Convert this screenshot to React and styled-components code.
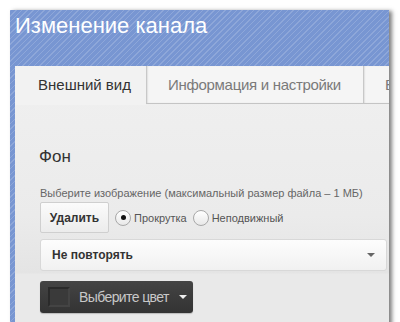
import React from "react";
import styled, { createGlobalStyle } from "styled-components";

const Global = createGlobalStyle`
  html, body { margin: 0; padding: 0; background: #fff; }
  body { font-family: "Liberation Sans", Arial, sans-serif; }
  * { box-sizing: border-box; }
`;

const Page = styled.div`
  padding: 10px 0 0 10px;
  height: 322px;
  overflow: hidden;
`;

const Panel = styled.div`
  width: 379px;
  height: 330px;
  background-color: #7896d2;
  background-image: repeating-linear-gradient(
    135deg,
    rgba(255, 255, 255, 0.16) 0px,
    rgba(255, 255, 255, 0.16) 1px,
    transparent 1px,
    transparent 4px
  );
  box-shadow: 3px 1px 4px rgba(0, 0, 0, 0.5);
  display: flex;
  flex-direction: column;
`;

const Title = styled.h1`
  margin: 3px 0 0 5px;
  font-size: 22px;
  line-height: 26px;
  font-weight: normal;
  color: #fff;
`;

const Card = styled.div`
  margin: 27px 0 0 5px;
  width: 374px;
  flex: 1;
  background: linear-gradient(#f0f0f0 0px, #ebebeb 150px, #e4e4e4 207px, #e9e9e9 208px);
  display: flex;
  flex-direction: column;
  overflow: hidden;
`;

const Tabs = styled.div`
  display: flex;
  height: 39px;
  width: 100%;
  white-space: nowrap;
  overflow: hidden;
`;

const Tab = styled.div`
  flex: ${(p) => (p.$grow ? "1 1 0" : "0 0 auto")};
  min-width: 0;
  width: ${(p) => (p.$w ? `${p.$w}px` : "auto")};
  padding-left: ${(p) => p.$pad}px;
  font-size: 15px;
  letter-spacing: ${(p) => (p.$active ? "0" : "-0.3px")};
  line-height: 38px;
  color: ${(p) => (p.$active ? "#333" : "#7a7a7a")};
  background: ${(p) => (p.$active ? "#f2f2f2" : "#f5f5f5")};
  height: ${(p) => (p.$active ? "39px" : "38px")};
  border-bottom: ${(p) => (p.$active ? "none" : "1px solid #c4c4c4")};
  box-shadow: ${(p) => (p.$active ? "none" : "inset 2px 0 2px -1px rgba(0,0,0,0.25)")};
  overflow: hidden;
`;

const Body = styled.div`
  padding: 42px 0 0 25px;
  display: flex;
  flex-direction: column;
  flex: 1;
`;

const Heading = styled.h2`
  margin: 0 0 0 -1px;
  font-size: 17px;
  line-height: 20px;
  font-weight: normal;
  color: #333;
`;

const Hint = styled.p`
  margin: 20px 0 0;
  font-size: 11px;
  line-height: 13px;
  color: #666;
`;

const Row = styled.div`
  display: flex;
  align-items: center;
  margin-top: 2px;
  height: 31px;
`;

const Button = styled.button`
  height: 31px;
  width: 69px;
  padding: 0;
  font-family: inherit;
  font-size: 12px;
  font-weight: bold;
  color: #333;
  background: linear-gradient(#fbfbfb, #ececec);
  border: 1px solid #cfcfcf;
  border-radius: 2px;
`;

const RadioLabel = styled.label`
  display: flex;
  align-items: center;
  margin-left: ${(p) => p.$ml}px;
  font-size: 11px;
  color: #555;
`;

const Radio = styled.span`
  width: 16px;
  height: 16px;
  border-radius: 50%;
  border: 1px solid #a8a8a8;
  background: linear-gradient(#fff, #e8e8e8);
  display: flex;
  align-items: center;
  justify-content: center;
  margin-right: 3px;
  &::after {
    content: "";
    width: 5px;
    height: 5px;
    border-radius: 50%;
    background: ${(p) => (p.$checked ? "#111" : "transparent")};
  }
`;

const Select = styled.div`
  margin-top: 6px;
  width: 347px;
  height: 32px;
  border: 1px solid #d8d8d8;
  border-radius: 3px;
  background: linear-gradient(#fdfdfd, #f1f1f1);
  display: flex;
  align-items: center;
  justify-content: space-between;
  padding: 0 11px 0 11px;
  font-size: 12px;
  font-weight: bold;
  color: #333;
`;

const Caret = styled.span`
  flex: none;
  width: 0;
  height: 0;
  border-left: ${(p) => p.$s}px solid transparent;
  border-right: ${(p) => p.$s}px solid transparent;
  border-top: ${(p) => p.$s}px solid ${(p) => p.$c};
`;

const ColorButton = styled.div`
  margin-top: 10px;
  width: 153px;
  height: 32px;
  border-radius: 3px;
  background: linear-gradient(#444, #333);
  display: flex;
  align-items: center;
  padding-left: 8px;
  white-space: nowrap;
  box-shadow: 0 1px 1px rgba(0, 0, 0, 0.2);
`;

const Swatch = styled.span`
  flex: none;
  width: 22px;
  height: 20px;
  background: #3a3a3a;
  border: 2px solid #2a2a2a;
  border-right-color: #444;
  border-bottom-color: #444;
`;

const ColorText = styled.span`
  margin: 0 10px 0 9px;
  font-size: 14px;
  letter-spacing: -0.6px;
  color: #c8c8c8;
`;

export default function App() {
  return (
    <>
      <Global />
      <Page>
        <Panel>
          <Title>Изменение канала</Title>
          <Card>
            <Tabs>
              <Tab $active $w={131} $pad={23}>Внешний вид</Tab>
              <Tab $w={217} $pad={22}>Информация и настройки</Tab>
              <Tab $grow $pad={22}>Возможности</Tab>
            </Tabs>
            <Body>
              <Heading>Фон</Heading>
              <Hint>Выберите изображение (максимальный размер файла – 1 МБ)</Hint>
              <Row>
                <Button>Удалить</Button>
                <RadioLabel $ml={6}>
                  <Radio $checked />
                  Прокрутка
                </RadioLabel>
                <RadioLabel $ml={6}>
                  <Radio />
                  Неподвижный
                </RadioLabel>
              </Row>
              <Select>
                Не повторять
                <Caret $s={4} $c="#666" />
              </Select>
              <ColorButton>
                <Swatch />
                <ColorText>Выберите цвет</ColorText>
                <Caret $s={4} $c="#eee" />
              </ColorButton>
            </Body>
          </Card>
        </Panel>
      </Page>
    </>
  );
}
